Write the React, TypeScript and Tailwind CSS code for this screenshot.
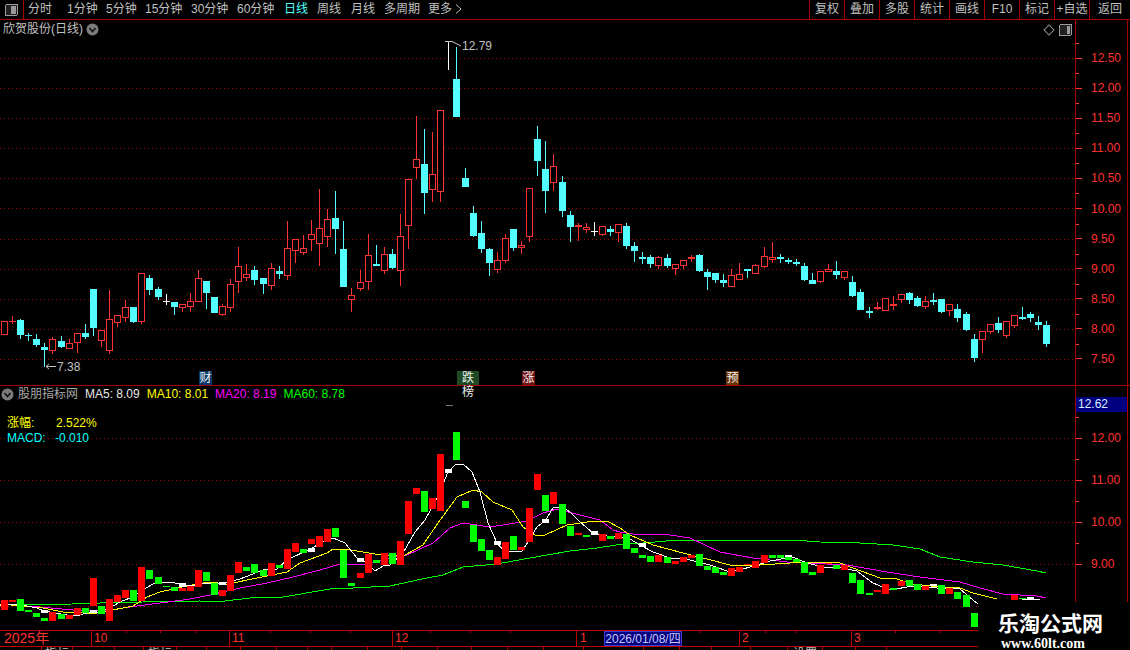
import React from 'react';

// kind, wick top, body top, body bottom, wick bottom (page pixels)
type Candle = [string, number, number, number, number];

const candles: Candle[] = [
  ['r', 321, 321, 335, 335], ['r', 316, 321, 322, 324], ['c', 319, 320, 335, 339], ['c', 333, 335, 336, 341], ['c', 334, 339, 345, 347],
  ['c', 343, 347, 350, 367], ['r', 337, 339, 351, 354], ['c', 336, 341, 347, 348], ['r', 339, 343, 349, 349], ['r', 333, 333, 343, 353],
  ['c', 324, 333, 337, 339], ['c', 289, 289, 328, 336], ['r', 330, 330, 341, 347], ['r', 290, 319, 351, 354], ['r', 315, 315, 323, 327],
  ['r', 300, 307, 318, 322], ['c', 307, 307, 322, 323], ['r', 273, 273, 322, 324], ['c', 275, 278, 290, 295], ['c', 287, 289, 297, 300],
  ['w', 294, 301, 302, 305], ['c', 302, 302, 307, 315], ['r', 304, 304, 308, 312], ['r', 293, 301, 307, 312], ['r', 270, 278, 302, 302],
  ['c', 281, 281, 293, 309], ['c', 297, 297, 313, 313], ['r', 304, 306, 315, 316], ['r', 279, 284, 308, 312], ['r', 247, 266, 282, 293],
  ['r', 264, 274, 278, 281], ['c', 266, 270, 280, 285], ['c', 278, 278, 284, 294], ['r', 263, 268, 286, 290], ['c', 266, 271, 274, 279],
  ['r', 221, 248, 276, 280], ['r', 239, 239, 251, 263], ['r', 235, 248, 253, 255], ['r', 220, 234, 240, 251], ['r', 189, 228, 244, 266],
  ['r', 209, 219, 237, 247], ['c', 191, 218, 229, 254], ['c', 221, 249, 287, 287], ['r', 288, 295, 300, 312], ['r', 270, 282, 289, 291],
  ['r', 234, 255, 282, 290], ['c', 245, 264, 266, 266], ['r', 247, 254, 271, 274], ['c', 249, 254, 268, 269], ['r', 214, 236, 271, 286],
  ['r', 179, 179, 226, 249], ['r', 116, 159, 168, 179], ['c', 129, 164, 193, 214], ['r', 132, 174, 190, 202], ['r', 110, 110, 192, 202],
  ['w', 41, 41, 42, 70], ['c', 47, 79, 117, 117], ['c', 168, 178, 187, 187], ['c', 206, 213, 236, 237], ['c', 221, 233, 249, 253],
  ['c', 248, 249, 263, 276], ['r', 252, 260, 270, 273], ['r', 234, 238, 261, 263], ['c', 229, 229, 248, 251], ['r', 241, 245, 248, 254],
  ['r', 188, 188, 237, 242], ['c', 126, 139, 161, 176], ['c', 141, 169, 191, 213], ['r', 154, 166, 183, 191], ['c', 176, 182, 211, 217],
  ['c', 211, 215, 227, 242], ['r', 223, 225, 227, 241], ['r', 223, 227, 230, 233], ['w', 222, 231, 232, 236], ['r', 226, 226, 235, 236],
  ['c', 226, 229, 232, 236], ['r', 224, 224, 233, 242], ['c', 223, 226, 246, 249], ['c', 242, 246, 251, 262], ['c', 252, 257, 259, 264],
  ['c', 255, 257, 264, 268], ['r', 256, 257, 266, 269], ['c', 254, 258, 266, 268], ['r', 264, 264, 269, 275], ['r', 260, 260, 266, 269],
  ['r', 255, 257, 259, 262], ['c', 254, 255, 271, 272], ['c', 269, 272, 277, 290], ['c', 273, 273, 280, 283], ['c', 274, 280, 283, 287],
  ['r', 269, 275, 287, 287], ['r', 263, 274, 280, 280], ['c', 270, 269, 271, 278], ['r', 264, 265, 274, 274], ['r', 247, 256, 267, 268],
  ['r', 242, 257, 260, 263], ['c', 254, 257, 259, 263], ['c', 258, 260, 262, 264], ['c', 259, 262, 264, 266], ['c', 263, 266, 280, 281],
  ['c', 273, 280, 284, 284], ['r', 271, 271, 282, 283], ['r', 264, 269, 272, 272], ['c', 261, 271, 275, 279], ['r', 271, 271, 278, 280],
  ['c', 276, 282, 296, 297], ['c', 289, 292, 310, 310], ['c', 307, 311, 313, 318], ['r', 302, 307, 309, 310], ['r', 298, 298, 311, 311],
  ['r', 296, 304, 306, 310], ['r', 294, 294, 300, 303], ['c', 292, 293, 300, 304], ['c', 296, 298, 306, 307], ['r', 296, 301, 307, 309],
  ['c', 293, 300, 302, 305], ['c', 299, 299, 312, 313], ['r', 304, 304, 311, 316], ['c', 304, 309, 318, 322], ['c', 312, 314, 330, 331],
  ['c', 334, 339, 358, 362], ['r', 331, 331, 340, 353], ['r', 324, 324, 332, 334], ['c', 317, 323, 330, 333], ['r', 321, 321, 336, 338],
  ['r', 315, 315, 326, 328], ['c', 307, 317, 319, 320], ['c', 312, 314, 318, 322], ['c', 316, 322, 325, 330], ['c', 321, 325, 344, 347],
];

// lower panel bars, same columns as the candles
type Bar = [string, number, number] | null;

const bars: Bar[] = [
  ['r', 600, 610], ['r', 600, 602], ['g', 599, 611], ['g', 610, 612], ['g', 613, 617], ['g', 618, 621], ['r', 612, 621], ['g', 614, 619], ['r', 615, 619], ['r', 608, 615],
  ['g', 608, 613], ['r', 578, 606], ['g', 606, 614], ['r', 599, 621], ['r', 595, 602], ['r', 590, 598], ['g', 590, 601], ['r', 567, 601], ['g', 570, 579], ['g', 577, 584],
  ['g', 586, 587], ['g', 587, 591], ['r', 588, 591], ['r', 586, 591], ['r', 570, 587], ['g', 572, 581], ['g', 583, 595], ['r', 590, 596], ['r', 575, 591], ['r', 562, 573],
  ['g', 567, 571], ['g', 564, 573], ['g', 570, 576], ['r', 563, 576], ['g', 565, 568], ['r', 549, 569], ['r', 543, 552], ['g', 549, 553], ['r', 539, 544], ['r', 536, 547],
  ['r', 529, 542], ['g', 528, 537], ['g', 550, 578], ['g', 583, 586], ['r', 573, 578], ['r', 554, 573], ['g', 560, 563], ['r', 553, 565], ['g', 553, 564], ['r', 541, 565],
  ['r', 501, 534], ['r', 488, 494], ['g', 491, 512], ['r', 498, 509], ['r', 454, 511], null, ['g', 432, 460], ['g', 501, 508], ['g', 525, 542], ['g', 539, 551],
  ['g', 550, 560], ['r', 557, 565], ['r', 542, 559], ['g', 536, 550], ['r', 547, 550], ['r', 508, 542], ['r', 474, 490], ['g', 495, 511], ['r', 492, 504], ['g', 504, 524],
  ['g', 526, 536], ['r', 533, 535], ['g', 535, 537], null, ['r', 534, 541], ['g', 536, 539], ['r', 533, 539], ['g', 534, 549], ['g', 548, 553], ['g', 555, 558],
  ['g', 556, 562], ['r', 555, 562], ['g', 557, 563], ['r', 561, 564], ['r', 557, 562], ['r', 555, 558], ['g', 554, 566], ['g', 566, 570], ['g', 567, 573], ['g', 572, 575],
  ['r', 568, 576], ['r', 567, 572], ['r', 564, 565], ['r', 561, 568], ['r', 555, 563], ['g', 555, 558], ['g', 555, 558], ['g', 557, 560], ['g', 559, 562], ['g', 562, 573],
  ['g', 572, 575], ['r', 565, 573], ['r', 563, 564], ['g', 565, 569], ['r', 565, 570], ['g', 573, 583], ['g', 580, 594], ['g', 593, 595], ['r', 590, 592], ['r', 584, 594],
  ['g', 588, 590], ['r', 581, 586], ['g', 580, 586], ['g', 584, 590], ['r', 586, 590], null, ['g', 585, 594], ['r', 588, 594], ['g', 592, 599], ['g', 595, 607],
  ['g', 613, 627], null, null, null, null, ['r', 595, 600], ['g', 598, 599],
];

const whites: [number, number, number][] = [
  [5, 610, 613], [11, 610, 613], [22, 583, 587], [27, 582, 585], [38, 548, 552], [44, 558, 562], [55, 469, 473],
  [61, 541, 545], [67, 519, 523], [73, 531, 535], [79, 543, 547], [97, 555, 557], [115, 584, 586], [127, 597, 600],
];

const ma5 = '0,606 15,604 27,606 37,608 44,611 67,615 80,615 90,612 100,612 113,606 122,601 133,597 146,588 153,584 172,582 182,585 193,586 202,583 223,583 240,579 263,570 277,569 287,560 308,550 327,540 333,538 345,543 357,558 367,563 375,571 383,566 390,565 403,553 415,532 425,520 437,498 448,472 455,465 463,464 472,472 480,492 488,523 497,543 503,550 513,552 522,551 528,542 537,527 545,521 553,508 562,507 570,512 580,522 593,533 607,536 620,537 630,539 640,545 653,552 670,558 690,560 710,565 730,572 743,569 757,565 770,561 793,557 807,563 823,567 843,568 857,571 873,583 890,590 913,586 937,588 960,589 973,600 978,604';
const ma5End = '1022,599 1040,599';
const ma10 = '0,604 43,608 63,612 83,613 97,613 133,606 147,597 160,592 182,587 203,583 215,582 225,585 247,580 277,574 287,572 300,563 327,553 333,549 345,549 363,552 387,556 405,555 423,545 438,523 457,497 473,490 482,492 493,502 512,510 523,527 535,535 545,535 567,525 587,522 607,521 620,528 630,535 653,545 683,553 707,559 730,565 760,565 790,563 817,562 840,563 853,568 880,578 897,579 913,584 940,587 960,588 973,593 997,599';
const ma20 = '0,604 40,607 73,610 110,610 137,606 168,602 190,599 210,595 240,588 267,583 293,577 320,570 340,564 367,564 390,558 407,555 433,543 450,528 463,523 490,527 503,525 527,521 543,513 557,509 580,515 600,520 613,530 620,532 633,534 663,534 690,538 720,552 753,558 787,562 807,563 847,565 887,572 920,577 960,582 980,588 1003,594 1037,596 1046,598';
const ma60 = '0,605 72,604 100,603 143,602 200,601 217,602 250,598 283,597 330,589 353,588 390,586 422,579 443,575 463,567 497,564 530,558 570,551 597,548 623,544 643,543 678,540 793,540 820,542 860,543 893,545 920,549 940,557 973,562 1003,565 1037,571 1046,573';

const colX = (i: number) => Math.round(1 + 8.08 * i);

const tabsLeft = [
  { label: '分时', w: 'w-[39px]' },
  { label: '1分钟', w: 'w-[39px]' },
  { label: '5分钟', w: 'w-[39px]' },
  { label: '15分钟', w: 'w-[46px]' },
  { label: '30分钟', w: 'w-[46px]' },
  { label: '60分钟', w: 'w-[47px]' },
  { label: '日线', w: 'w-[33px]', active: true },
  { label: '周线', w: 'w-[34px]' },
  { label: '月线', w: 'w-[33px]' },
  { label: '多周期', w: 'w-[44px]' },
  { label: '更多', w: 'w-[27px]' },
];

const tabsRight = ['复权', '叠加', '多股', '统计', '画线', 'F10', '标记', '+自选', '返回'];

const CircleDown = () => (
  <svg width="13" height="13" viewBox="0 0 13 13">
    <circle cx="6.5" cy="6.5" r="6" fill="#7c7c7c" />
    <path d="M3.5 5 L6.5 8.5 L9.5 5" fill="none" stroke="#111" strokeWidth="1.6" />
  </svg>
);

const PanelIcon = ({ wide }: { wide?: boolean }) => (
  <svg width="13" height="12" viewBox="0 0 13 12" shapeRendering="crispEdges">
    <rect x="0.5" y="0.5" width="12" height="11" rx="1.5" fill="#222" stroke="#9a9a9a" />
    <rect x={wide ? 6 : 8} y="2" width={wide ? 5 : 3} height="8" fill="#9a9a9a" />
  </svg>
);

const Toolbar = () => (
  <header className="flex h-[20px] border-b border-[#a80000] text-[12px] leading-[19px] text-[#c0c0c0]">
    <div className="flex w-[24px] items-center justify-center border-r border-[#a80000] pl-[0px]">
      <PanelIcon wide />
    </div>
    <nav className="flex flex-1 pl-[4px]">
      {tabsLeft.map((t) => (
        <span key={t.label} className={`${t.w} ${t.active ? 'text-[#54ffff]' : ''}`}>
          {t.label}
        </span>
      ))}
      <svg width="7" height="19" viewBox="0 0 7 19" className="ml-[0px]">
        <path d="M1 4.5 L6 9 L1 13.5" fill="none" stroke="#c0c0c0" />
      </svg>
    </nav>
    {tabsRight.map((t, i) => (
      <span
        key={t}
        className={`${i === 8 ? 'w-[41px]' : 'w-[35px]'} border-l border-[#a80000] text-center`}
      >
        {t}
      </span>
    ))}
  </header>
);

const GridLines = ({ ys }: { ys: number[] }) => (
  <>
    {ys.map((y) => (
      <line key={y} x1="0" x2="1075" y1={y + 0.5} y2={y + 0.5} stroke="#9c0000" strokeDasharray="1 3" />
    ))}
  </>
);

const PriceChart = () => (
  <svg width="1075" height="365" viewBox="0 20 1075 365" shapeRendering="crispEdges" className="block">
    <GridLines ys={[58, 88, 118, 148, 178, 208, 239, 269, 299, 329, 359]} />
    {candles.map(([k, wt, bt, bb, wb], i) => {
      const x = colX(i);
      const col = k === 'r' ? '#ff3232' : k === 'c' ? '#54ffff' : '#ffffff';
      const hollow = k === 'r' && bb - bt > 2;
      return (
        <g key={i}>
          <rect x={x + 3} y={wt} width="1" height={Math.max(wb - wt, 1)} fill={col} />
          {hollow ? (
            <rect x={x + 0.5} y={bt + 0.5} width="6" height={bb - bt - 1} fill="#000" stroke={col} />
          ) : (
            <rect x={x} y={bt} width="7" height={Math.max(bb - bt, 1)} fill={col} />
          )}
        </g>
      );
    })}
    <path d="M445.5 41.5 H452 M448.5 41 V43 M452 41.5 L461 46" fill="none" stroke="#c8c8c8" shapeRendering="auto" />
    <path d="M46 366.5 H56 M46 366.5 L49 364 M46 366.5 L49 369" fill="none" stroke="#c0c0c0" shapeRendering="auto" />
    <text x="462" y="50" fill="#c0c0c0" fontSize="12" fontFamily="Liberation Sans, sans-serif">12.79</text>
    <text x="57" y="371" fill="#c0c0c0" fontSize="12" fontFamily="Liberation Sans, sans-serif">7.38</text>
  </svg>
);

const IndicatorChart = () => (
  <svg width="1075" height="244" viewBox="0 386 1075 244" shapeRendering="crispEdges" className="block">
    <GridLines ys={[438, 480, 522, 564, 606]} />
    <polyline points={ma60} fill="none" stroke="#00ff00" />
    <polyline points={ma20} fill="none" stroke="#ff00ff" />
    <polyline points={ma10} fill="none" stroke="#ffff00" />
    <polyline points={ma5} fill="none" stroke="#ffffff" />
    <polyline points={ma5End} fill="none" stroke="#ffffff" />
    {bars.map((b, i) =>
      b ? (
        <rect key={i} x={colX(i)} y={b[1]} width="7" height={b[2] - b[1]} fill={b[0] === 'r' ? '#ff0000' : '#00ff00'} />
      ) : null,
    )}
    {whites.map(([i, t, b]) => (
      <rect key={i} x={colX(i)} y={t} width="7" height={b - t} fill="#fff" />
    ))}
    <rect x="446" y="405" width="7" height="1" fill="#777" />
  </svg>
);

const AxisRow = ({ label, h }: { label?: string; h: string }) => (
  <div className={`relative flex items-center ${h}`}>
    <span className="absolute left-0 top-0 h-px w-[3px] bg-[#ff3232]" />
    <span className="h-px w-[6px] bg-[#ff3232]" />
    <span className="ml-[9px]">{label}</span>
  </div>
);

const upperLabels = ['12.50', '12.00', '11.50', '11.00', '10.50', '10.00', '9.50', '9.00', '8.50', '8.00', '7.50'];
const lowerLabels = ['12.00', '11.00', '10.00', '9.00'];

const timeTicks = [126, 160, 195, 270, 310, 350, 430, 470, 510, 640, 700, 765, 795, 895, 940];

const timeLabels = [
  { x: 'w-[91px]', t: '2025年', pad: 'pl-[4px]' },
  { x: 'w-[138px]', t: '10', pad: 'pl-[2px]' },
  { x: 'w-[163px]', t: '11', pad: 'pl-[2px]' },
  { x: 'w-[184px]', t: '12', pad: 'pl-[2px]' },
  { x: 'w-[163px]', t: '1', pad: 'pl-[3px]' },
  { x: 'w-[112px]', t: '2', pad: 'pl-[2px]' },
  { x: 'flex-1', t: '3', pad: 'pl-[2px]' },
];

const stripCells = [42, 31, 42, 29, 33, 30, 34, 36, 31, 24, 36, 34, 36, 34, 36, 36, 40, 60, 36, 32, 39, 37, 35, 33, 31];

const TimeAxis = () => (
  <div className="relative flex h-[17px] border-y border-[#c00000] text-[12px] leading-[15px] text-[#ff3232]">
    {timeLabels.map((l, i) => (
      <span key={l.t} className={`${l.x} ${l.pad} ${i > 0 ? 'border-l border-[#c00000]' : ''} ${i === 0 ? 'text-[14px]' : ''}`}>
        {l.t}
      </span>
    ))}
    {timeTicks.map((x) => (
      <span key={x} className="absolute top-0 h-[2px] w-px bg-[#c00000]" style={{ left: x }} />
    ))}
    <span className="absolute left-[604px] top-0 h-[15px] w-[78px] border border-[#3c3cd0] bg-[#000080] text-center leading-[14px] text-[#c8c8ff]">
      2026/01/08/四
    </span>
  </div>
);

const TabStrip = () => (
  <div className="flex h-[3px] overflow-hidden text-[12px] leading-[14px] text-[#c0c0c0]">
    {stripCells.map((w, i) => (
      <span key={i} className="shrink-0 border-r border-[#c00000] text-center" style={{ width: w }}>
        {i === 1 || i === 4 ? '指标' : i === 22 ? '设置' : ''}
      </span>
    ))}
  </div>
);

const Marker = ({ text, left, color, w }: { text: string; left: string; color: string; w: string }) => (
  <span className={`absolute top-[351px] h-[14px] text-center text-[12px] leading-[14px] text-[#f0f0f0] ${left} ${color} ${w}`}>
    {text}
  </span>
);

export default function App() {
  return (
    <div className="relative h-[650px] w-[1130px] overflow-hidden bg-black font-['Liberation_Sans','Noto_Sans_CJK_SC',sans-serif]">
      <Toolbar />

      <section className="flex h-[366px] border-b border-[#a80000]">
        <div className="relative w-[1075px]">
          <PriceChart />
          <div className="absolute left-[3px] top-[2px] flex items-center gap-[3px] text-[12px] leading-[14px] text-[#c0c0c0]">
            <span>欣贺股份(日线)</span>
            <CircleDown />
          </div>
          <div className="absolute right-[3px] top-[4px] flex items-center gap-[6px]">
            <span className="block h-[8px] w-[8px] rotate-45 border border-[#8a8a8a]" />
            <PanelIcon />
          </div>
          <Marker text="财" left="left-[199px]" color="bg-[#0a3a6a]" w="w-[13px]" />
          <Marker text="跌榜" left="left-[457px]" color="bg-[#1d4a22]" w="w-[22px]" />
          <Marker text="涨" left="left-[522px]" color="bg-[#701414]" w="w-[13px]" />
          <Marker text="预" left="left-[726px]" color="bg-[#6a3408]" w="w-[13px]" />
        </div>
        <div className="w-[53px] border-x border-[#a80000] pt-[23px] text-[12px] text-[#ff3232]">
          {upperLabels.map((l) => (
            <AxisRow key={l} label={l} h="h-[30.1px]" />
          ))}
        </div>
      </section>

      <section className="flex h-[264px]">
        <div className="w-[1075px]">
          <div className="relative">
            <IndicatorChart />
            <div className="absolute left-[1px] top-[1px] flex items-center gap-[7px] text-[12px] leading-[14px]">
              <span className="flex items-center gap-[4px] text-[#a8a8a8]">
                <CircleDown />
                股朋指标网
              </span>
              <span className="text-[#e8e8e8]">MA5: 8.09</span>
              <span className="text-[#ffff00]">MA10: 8.01</span>
              <span className="text-[#ff00ff]">MA20: 8.19</span>
              <span className="text-[#00ff00]">MA60: 8.78</span>
            </div>
            <div className="absolute left-[7px] top-[30px] text-[12px] leading-[15px]">
              <div className="flex text-[#ffff00]">
                <span className="w-[49px]">涨幅:</span>
                <span>2.522%</span>
              </div>
              <div className="flex text-[#00ffff]">
                <span className="w-[48px]">MACD:</span>
                <span>-0.010</span>
              </div>
            </div>
          </div>
          <TimeAxis />
          <TabStrip />
        </div>
        <div className="relative w-[53px] border-x border-[#a80000] pt-[31px] text-[12px] text-[#ff3232]">
          <span className="absolute left-0 top-[11px] h-[15px] w-[51px] bg-[#000080] pl-[2px] leading-[15px] text-[#d8f0ff]">12.62</span>
          {lowerLabels.map((l) => (
            <AxisRow key={l} label={l} h="h-[42px]" />
          ))}
        </div>
      </section>

      <div className="absolute bottom-0 right-0 h-[48px] w-[152px] bg-black pl-[20px] pt-[10px] text-white">
        <div className="text-[21px] leading-[24px] font-bold">乐淘公式网</div>
        <div className="ml-[3px] font-['Liberation_Serif',serif] text-[14px] leading-[16px] font-bold">www.60lt.com</div>
      </div>
    </div>
  );
}
